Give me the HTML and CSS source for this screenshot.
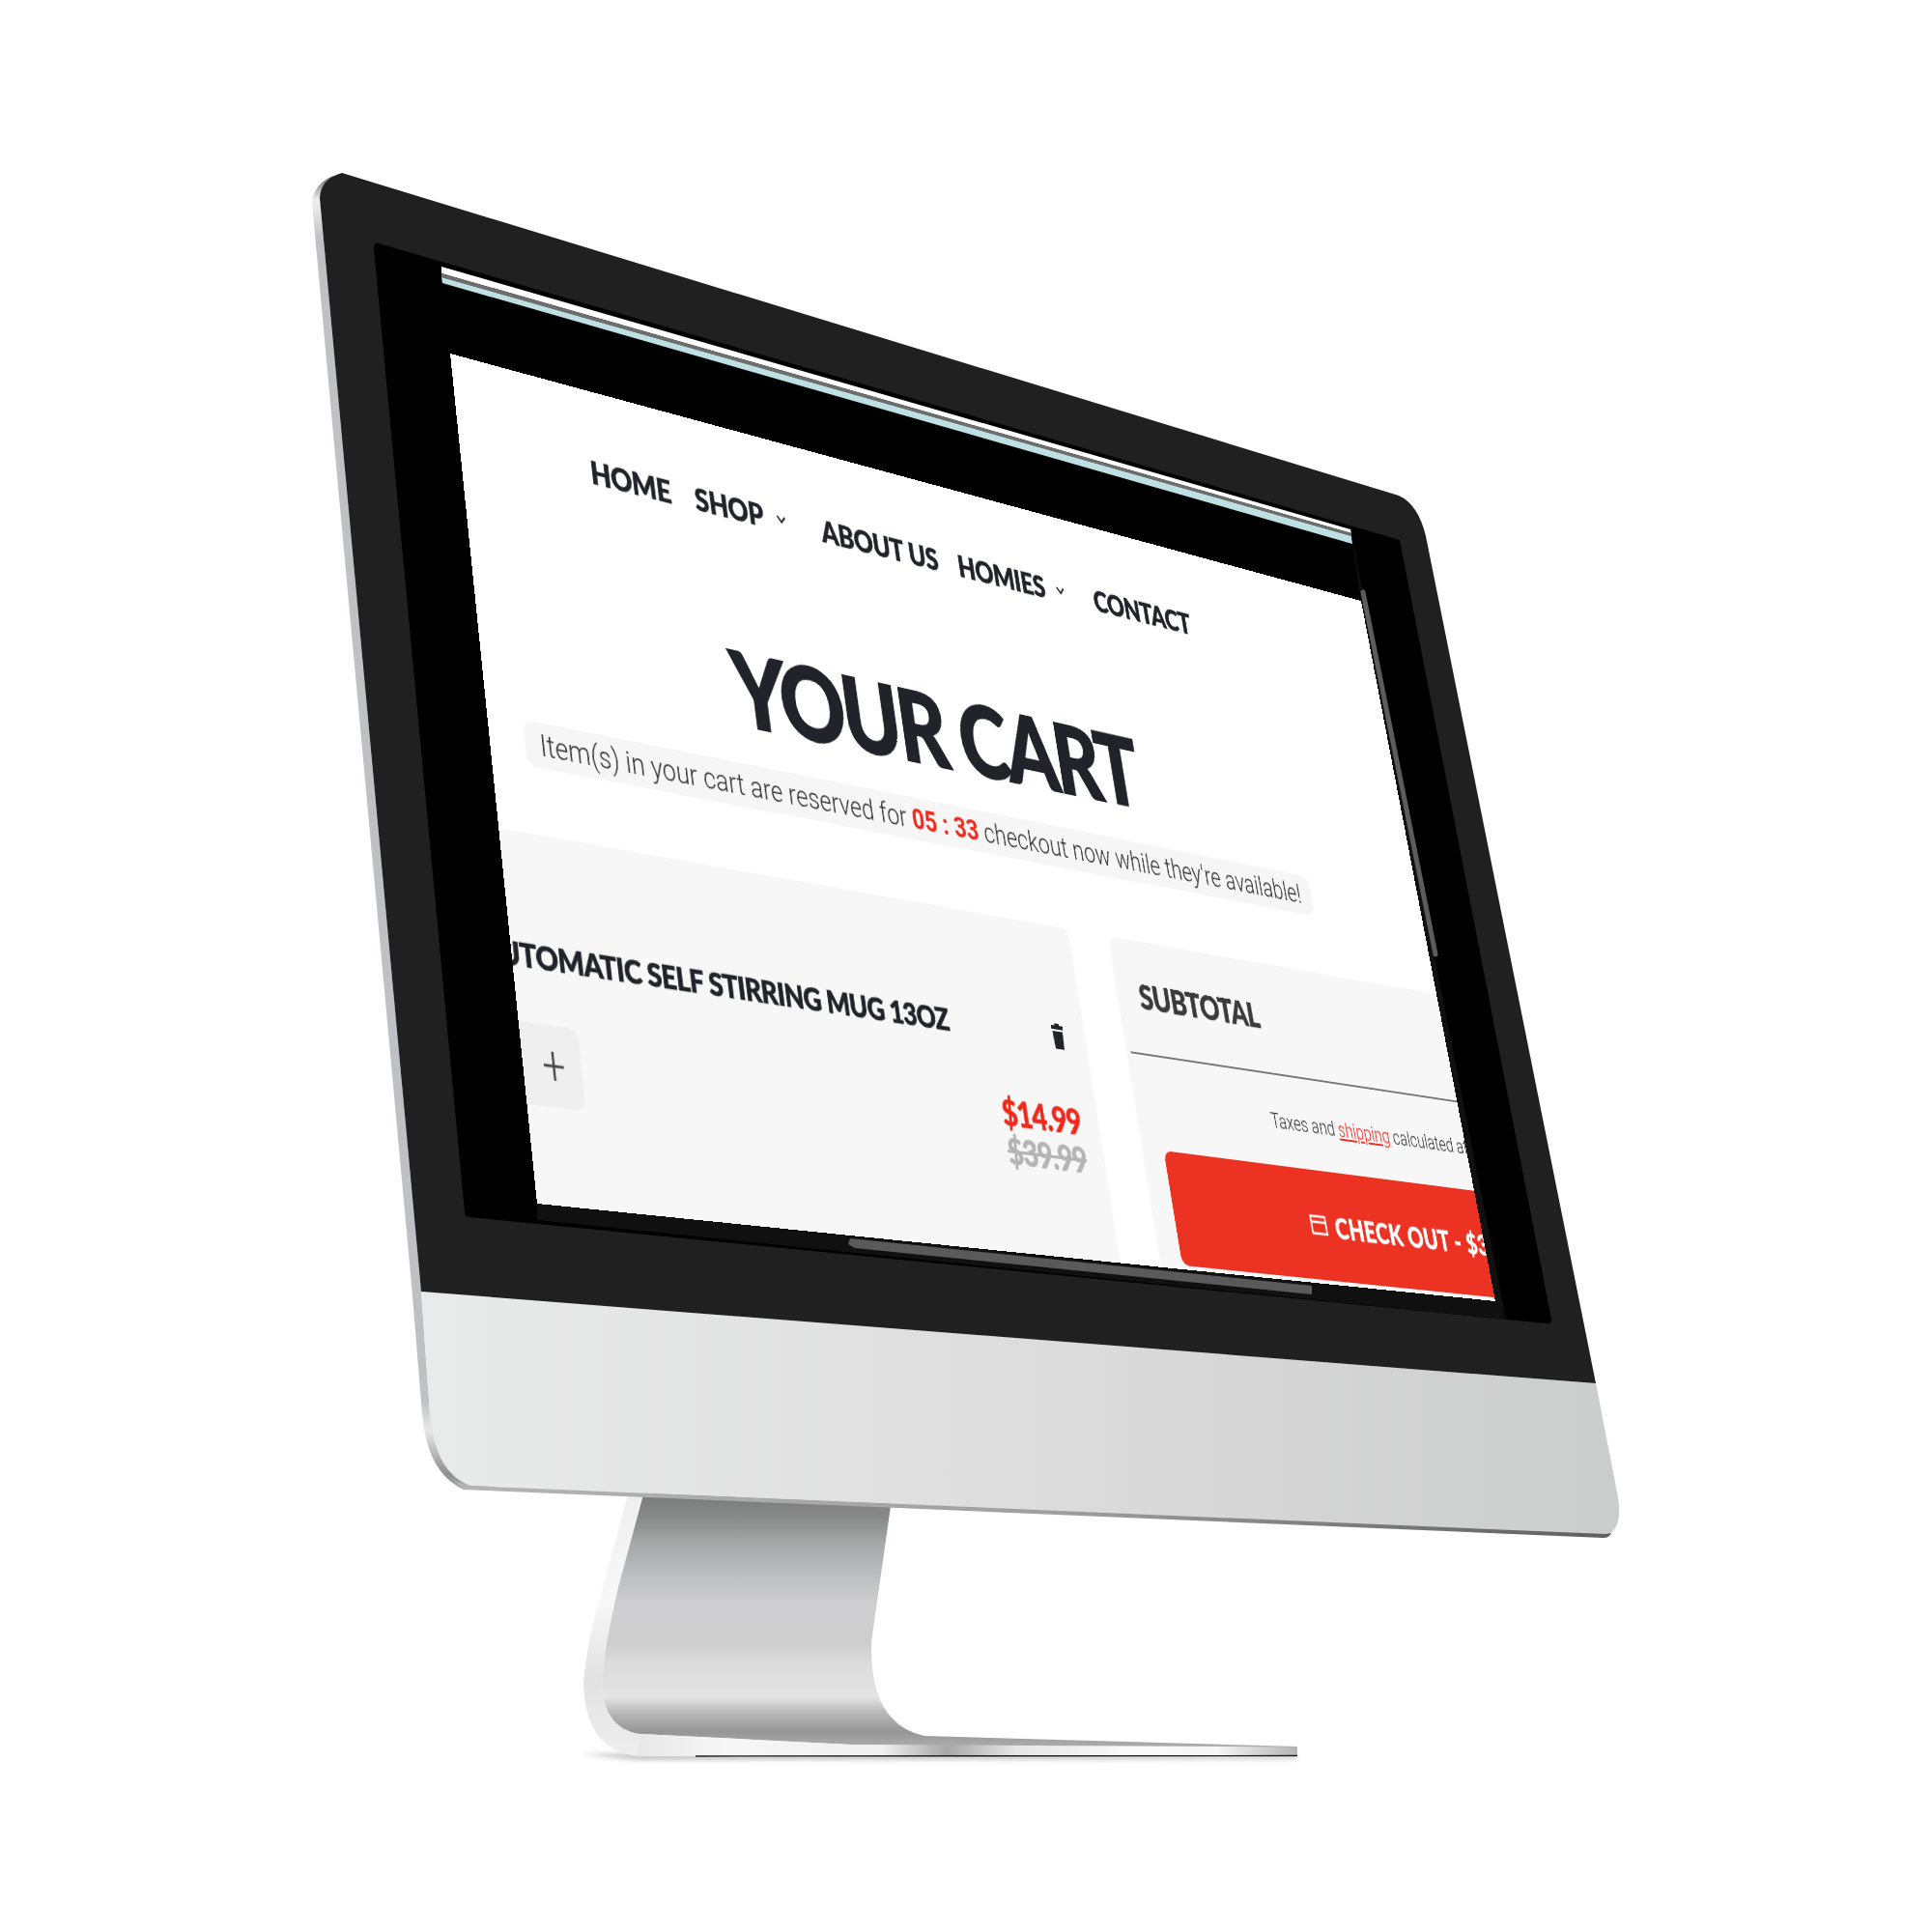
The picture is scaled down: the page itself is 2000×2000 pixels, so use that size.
FILE: index.html
```html
<!DOCTYPE html>
<html lang="en">
  <head>
    <meta charset="UTF-8" />
    <meta name="viewport" content="width=device-width, initial-scale=1.0" />
    <title>Your Cart</title>
    <link rel="stylesheet" href="styles.css">
  </head>
  <body>
    <div class="stage">
      <svg class="imac" width="2000" height="2000" viewBox="0 0 2000 2000" aria-hidden="true">
        <defs>
          <linearGradient id="standFace" gradientUnits="userSpaceOnUse" x1="0" y1="1550" x2="0" y2="1810">
            <stop offset="0" stop-color="#7c7c7c" />
            <stop offset="0.09" stop-color="#8a8b8b" />
            <stop offset="0.19" stop-color="#a8a9a9" />
            <stop offset="0.31" stop-color="#bcbdc0" />
            <stop offset="0.435" stop-color="#d0d0d2" />
            <stop offset="0.577" stop-color="#cdcdcd" />
            <stop offset="0.665" stop-color="#dcdcdc" />
            <stop offset="0.796" stop-color="#e4e4e4" />
            <stop offset="0.858" stop-color="#b8b8b8" />
            <stop offset="0.935" stop-color="#969696" />
            <stop offset="1" stop-color="#b0b0b0" />
          </linearGradient>
          <linearGradient id="standSide" gradientUnits="userSpaceOnUse" x1="0" y1="1550" x2="0" y2="1818">
            <stop offset="0" stop-color="#efefef" />
            <stop offset="0.4" stop-color="#f7f8f7" />
            <stop offset="0.7" stop-color="#e2e2e2" />
            <stop offset="1" stop-color="#eeeeee" />
          </linearGradient>
          <linearGradient id="standBase" gradientUnits="userSpaceOnUse" x1="650" y1="0" x2="1343" y2="0">
            <stop offset="0" stop-color="#e6e6e6" />
            <stop offset="0.15" stop-color="#f6f7f6" />
            <stop offset="0.38" stop-color="#f0f0f0" />
            <stop offset="0.476" stop-color="#a8a8a8" />
            <stop offset="0.58" stop-color="#e6e6e6" />
            <stop offset="0.75" stop-color="#fafafa" />
            <stop offset="0.88" stop-color="#f6f6f6" />
            <stop offset="1" stop-color="#b4b4b4" />
          </linearGradient>
          <linearGradient id="chin" gradientUnits="userSpaceOnUse" x1="436" y1="0" x2="1676" y2="0">
            <stop offset="0" stop-color="#e9ebea" />
            <stop offset="0.4" stop-color="#dfe0df" />
            <stop offset="0.7" stop-color="#d6d6d6" />
            <stop offset="1" stop-color="#cbcccc" />
          </linearGradient>
          <linearGradient id="chinEdge" gradientUnits="userSpaceOnUse" x1="480" y1="0" x2="1670" y2="0">
            <stop offset="0" stop-color="#b4b4b4" />
            <stop offset="0.5" stop-color="#a0a0a0" />
            <stop offset="1" stop-color="#5e5e5e" />
          </linearGradient>
          <linearGradient id="sideEdge" gradientUnits="userSpaceOnUse" x1="0" y1="180" x2="0" y2="1542">
            <stop offset="0" stop-color="#5c5c5c" />
            <stop offset="0.02" stop-color="#f0f0f0" />
            <stop offset="0.05" stop-color="#c0c1c5" />
            <stop offset="0.932" stop-color="#bfc0c4" />
            <stop offset="0.955" stop-color="#e8e8e8" />
            <stop offset="0.988" stop-color="#8f8f8f" />
            <stop offset="1" stop-color="#aaaaaa" />
          </linearGradient>
          <filter id="soft" x="-10%" y="-300%" width="120%" height="700%">
            <feGaussianBlur stdDeviation="2.5" />
          </filter>
        </defs>

        <!-- stand -->
        <path d="M600,1816 L660,1815 L1343,1818 L1343,1821 L660,1822 Z" fill="#8a8a8a" opacity="0.5" filter="url(#soft)" />
        <path d="M652,1540 L623,1647 Q607,1700 604,1743 Q606,1812 660,1818 L700,1818 L663,1795 Q625,1790 623,1743 Q625,1707 640,1643 L668,1540 Z" fill="url(#standSide)" />
        <path d="M668,1540 L923,1552 L902,1700 Q900,1785 957,1797 L1343,1808 L1343,1812 L880,1806 L663,1795 Q625,1790 623,1743 Q625,1707 640,1643 Z" fill="url(#standFace)" />
        <path d="M663,1795 L880,1806 L1343,1808.5 L1343,1817 L660,1818 Z" fill="url(#standBase)" />
        <path class="stand_line" d="M720,1818 L1343,1817.5" />

        <!-- body -->
        <path d="M345,182 Q325,190 323,210 L426,1330 L437,1463 Q442,1525 480,1542 L520,1542 L487,1530 L445,1463 L436,1337 L331,205 Z" fill="url(#sideEdge)" />
        <path d="M436,1337 L1652,1432 L1675,1550 Q1680,1585 1662,1589 L487,1538 Q450,1525 445,1463 Z" fill="url(#chin)" />
        <path d="M470,1533 L487,1538 L1662,1588 L1668,1587 Q1666,1592 1660,1592 L480,1542 Z" fill="url(#chinEdge)" />
        <path class="bezel" d="M331,205 Q332,185 354,179 L1448,513 Q1468,522 1476,555 L1652,1432 L436,1337 Z" />

        <!-- display glass -->
        <path class="glass" d="M392,252 L1449,559 L1606,1366 Q1606,1371 1601,1370 L486,1260 Q481,1260 481,1255 L387,257 Q387,251 392,252 Z" />
        <polygon points="457,276 1398,548 1399,552 457,283" fill="#ffffff" />
        <polygon points="457,283 1399,552 1399,555 457,287" fill="#6e6e6e" />
        <polygon points="457,287 1399,555 1400,563 458,293" fill="#bfe0e3" />
        <polygon class="glass_band" points="1398,548 1559,1366 556,1263 556,1246 1548,1347 1409,622" />
        <line class="scroll_bar" x1="1411" y1="613" x2="1486" y2="988" />
        <polygon class="scroll_thumb" points="880,1282 1358,1331 1358,1340 885,1292 878,1288" />
      </svg>

      <div class="page">
        <nav class="menu">
          <a class="menu_home" href="#">HOME</a>
          <a class="menu_shop" href="#">SHOP</a>
          <svg class="chevron chevron_shop" width="14" height="10" viewBox="0 0 14 10"><path d="M2,2 L7,8 L12,2" /></svg>
          <a class="menu_about" href="#">ABOUT US</a>
          <a class="menu_homies" href="#">HOMIES</a>
          <svg class="chevron" width="14" height="10" viewBox="0 0 14 10"><path d="M2,2 L7,8 L12,2" /></svg>
          <a class="menu_contact" href="#">CONTACT</a>
        </nav>

        <h1 class="page_title">YOUR CART</h1>
        <p class="reserve_msg">Item(s) in your cart are reserved for <b>05 : 33</b> checkout now while they're available!</p>

        <main class="cart_wrap">
          <section class="cart_box">
            <div class="item_head">
              <h2 class="item_name">AUTOMATIC SELF STIRRING MUG 13OZ</h2>
              <svg class="item_trash" width="16" height="26" viewBox="0 0 16 26"><path d="M5,0 H11 V2 H16 V6 H0 V2 H5 Z M1,8 H15 L14,26 H2 Z" /></svg>
            </div>
            <div class="item_body">
              <div class="qty_box">
                <svg width="22" height="26" viewBox="0 0 22 26"><path d="M11,0 V26 M0,13 H22" /></svg>
              </div>
              <div class="price_box">
                <div class="price_now">$14.99</div>
                <div class="price_old">$39.99</div>
              </div>
            </div>
          </section>

          <section class="summary_box">
            <h2 class="summary_title">SUBTOTAL</h2>
            <p class="summary_note">Taxes and <a href="#">shipping</a> calculated at checkout</p>
            <a class="checkout_btn" href="#">
              <svg width="26" height="22" viewBox="0 0 26 22"><path d="M2,2 H24 V20 H2 Z M2,8 H24" /></svg>
              <span>CHECK OUT - $39.98</span>
            </a>
          </section>
        </main>
      </div>
    </div>
  </body>
</html>
```

FILE: styles.css
```css
* {
  margin: 0;
  padding: 0;
  box-sizing: border-box;
  color: inherit;
  text-decoration: none;
}
body {
  background-color: white;
}
.stage {
  position: relative;
  width: 2000px;
  height: 2000px;
  overflow: hidden;
}
.imac {
  position: absolute;
  left: 0;
  top: 0;
}
.stand_line {
  fill: none;
  stroke: #1c1c1c;
  stroke-width: 1.3;
}
.bezel {
  fill: #202020;
}
.glass {
  fill: #000000;
}
.glass_band {
  fill: #101010;
}
.scroll_bar {
  stroke: #5c5c5c;
  stroke-width: 5;
  stroke-linecap: round;
}
.scroll_thumb {
  fill: #5a5a5a;
}

/* the site, flat 1280x800, then put on the screen quad */
.page {
  position: absolute;
  left: 0;
  top: 0;
  width: 1280px;
  height: 800px;
  overflow: hidden;
  background-color: white;
  transform-origin: 0 0;
  transform: matrix3d(0.98447, 0.30937, 0, 0.00017584, 0.05625, 0.97395, 0, -0.00010116, 0, 0, 1, 0, 466, 366, 0, 1);
  font-family: 'Roboto', 'Liberation Sans', sans-serif;
  color: #202329;
}
.menu {
  display: flex;
  align-items: center;
  height: 36px;
  margin-top: 67px;
  padding-left: 154px;
  font-family: 'Lato', 'Liberation Sans', sans-serif;
  font-weight: 900;
  font-size: 32px;
  letter-spacing: -0.3px;
  -webkit-text-stroke: 0.7px #202329;
}
.menu_shop {
  margin-left: 30px;
}
.chevron {
  margin-left: 16px;
  flex-shrink: 0;
}
.chevron path {
  fill: none;
  stroke: #202329;
  stroke-width: 2;
}
.menu_about {
  margin-left: 46px;
}
.menu_homies {
  margin-left: 28px;
}
.menu_contact {
  margin-left: 42px;
}
.page_title {
  margin: 112px 0 0 -130px;
  text-align: center;
  font-family: 'Lato', 'Liberation Sans', sans-serif;
  font-weight: 900;
  font-size: 104px;
  line-height: 120px;
  letter-spacing: -4.2px;
  -webkit-text-stroke: 1.8px #202329;
}
.reserve_msg {
  width: 1058px;
  height: 44px;
  margin: 19px 0 0 40px;
  padding-left: 17px;
  border-radius: 12px;
  background-color: #f6f6f6;
  font-weight: 300;
  font-size: 29px;
  line-height: 44px;
  letter-spacing: 0.1px;
  white-space: nowrap;
  color: #333333;
}
.reserve_msg b {
  font-weight: 700;
  color: #f0291c;
}
.cart_wrap {
  display: flex;
  gap: 57px;
  margin: 65px 0 0 -60px;
}
.cart_box {
  flex-shrink: 0;
  width: 771px;
  height: 400px;
  padding: 96px 30px 0 26px;
  border-radius: 0 10px 0 0;
  background-color: #f7f7f7;
}
.item_head {
  display: flex;
  justify-content: space-between;
  align-items: flex-end;
}
.item_name {
  font-family: 'Lato', 'Liberation Sans', sans-serif;
  font-weight: 900;
  font-size: 31px;
  line-height: 36px;
  letter-spacing: -0.6px;
  white-space: nowrap;
  -webkit-text-stroke: 0.7px #202329;
}
.item_trash {
  fill: #202329;
  margin-bottom: 4px;
}
.item_body {
  display: flex;
  justify-content: space-between;
  align-items: flex-start;
  margin-top: 44px;
}
.qty_box {
  display: flex;
  justify-content: flex-end;
  align-items: center;
  width: 99px;
  height: 74px;
  padding-right: 20px;
  border-radius: 10px;
  background-color: #efefef;
}
.qty_box path {
  fill: none;
  stroke: #444444;
  stroke-width: 2.5;
}
.price_box {
  margin: 4px -5px 0 0;
  text-align: right;
  font-family: 'Lato', 'Liberation Sans', sans-serif;
  font-weight: 900;
  font-size: 36px;
  line-height: 38px;
  letter-spacing: -1px;
}
.price_now {
  color: #f0291c;
  -webkit-text-stroke: 0.5px #f0291c;
}
.price_old {
  color: #b4b4b4;
  text-decoration: line-through;
  -webkit-text-stroke: 0.5px #b4b4b4;
}
.summary_box {
  flex-shrink: 0;
  width: 600px;
  height: 400px;
  border-radius: 10px 0 0 0;
  background-color: #f7f7f7;
}
.summary_title {
  height: 121px;
  margin-left: 6px;
  padding: 36px 0 0 26px;
  border-bottom: 2px solid #777777;
  font-family: 'Lato', 'Liberation Sans', sans-serif;
  font-weight: 900;
  font-size: 36px;
  line-height: 44px;
  letter-spacing: -0.6px;
  color: #3b3b3b;
  -webkit-text-stroke: 0.7px #3b3b3b;
}
.summary_note {
  margin-top: 36px;
  padding-left: 201px;
  font-size: 22px;
  font-weight: 300;
  line-height: 28px;
  white-space: nowrap;
  color: #333333;
}
.summary_note a {
  color: #f0291c;
  text-decoration: underline;
}
.checkout_btn {
  display: flex;
  align-items: center;
  gap: 12px;
  width: 540px;
  height: 115px;
  margin: 33px 0 0 31px;
  padding-left: 203px;
  border-radius: 10px;
  background-color: #ec3323;
  font-family: 'Lato', 'Liberation Sans', sans-serif;
  font-weight: 900;
  font-size: 31px;
  letter-spacing: 0.5px;
  white-space: nowrap;
  color: white;
  -webkit-text-stroke: 0.5px white;
}
.checkout_btn svg {
  flex-shrink: 0;
}
.checkout_btn path {
  fill: none;
  stroke: white;
  stroke-width: 2.5;
}
```
